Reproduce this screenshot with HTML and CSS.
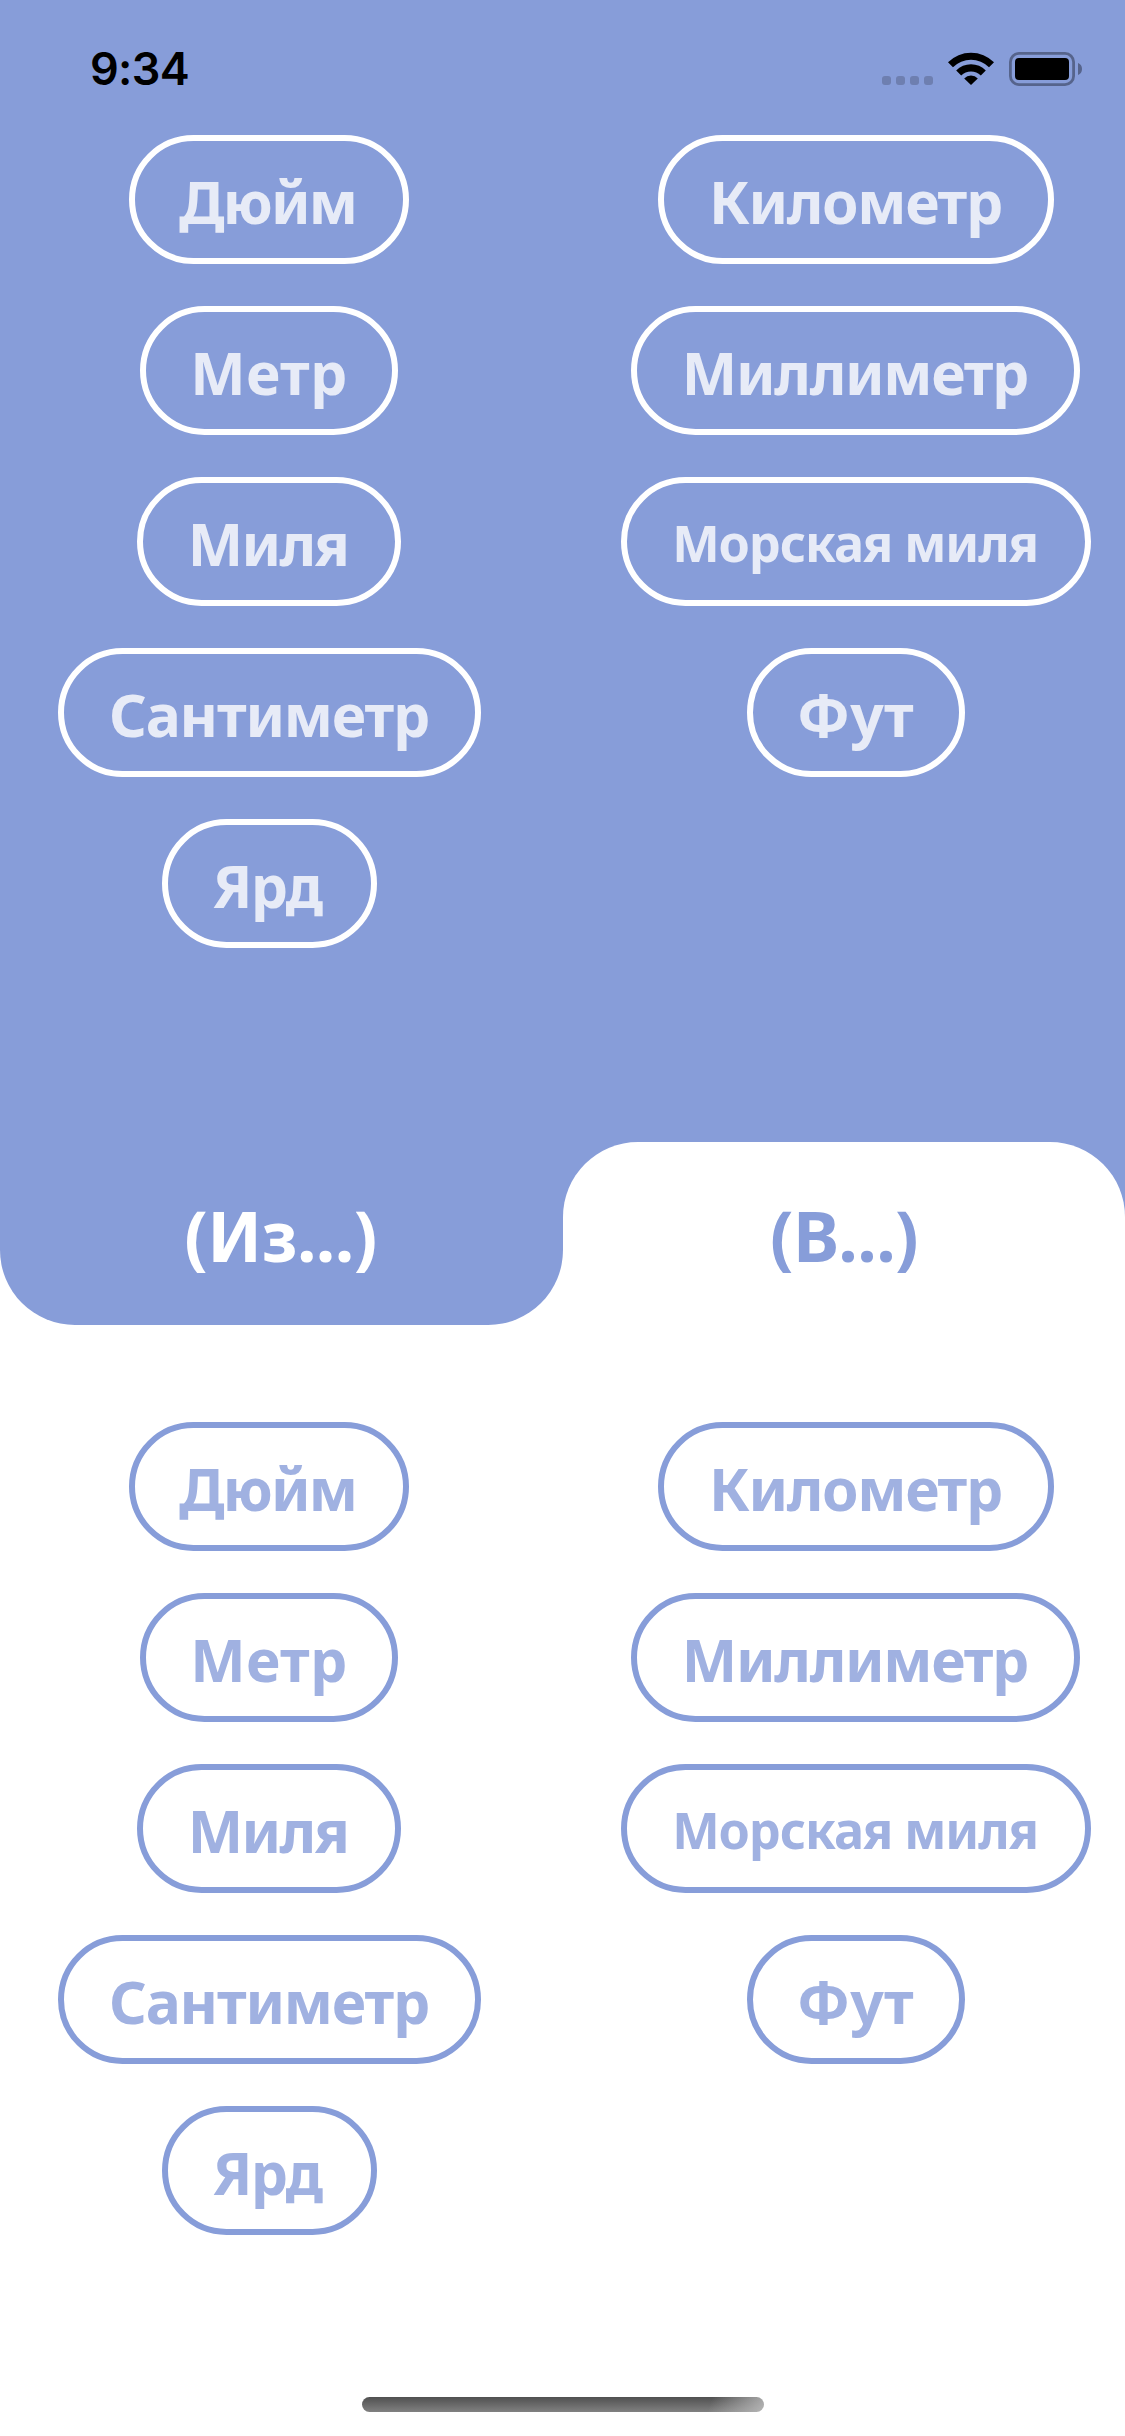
FILE: index.html
```html
<!DOCTYPE html>
<html lang="ru">
<head>
  <meta charset="utf-8">
  <title>Конвертер длины</title>
  <link rel="stylesheet" href="styles.css">
</head>
<body>
  <div class="screen">
    <section class="panel panel-from">
      <header class="status">
        <span class="time">9:34</span>
        <div class="status-icons">
          <span class="signal"><i></i><i></i><i></i><i></i></span>
          <svg class="wifi" width="46" height="33" viewBox="0 0 46 33">
            <path d="M0 10.2A32.5 32.5 0 0 1 46 10.2L41 15.2A25.6 25.6 0 0 0 5 15.2Z"/>
            <path d="M8.2 18.4A20.9 20.9 0 0 1 37.8 18.4L32.8 23.4A14 14 0 0 0 13.2 23.4Z"/>
            <path d="M16.2 26.4A9.6 9.6 0 0 1 29.8 26.4L23 33Z"/>
          </svg>
          <svg class="battery" width="74" height="34" viewBox="0 0 74 34">
            <rect class="shell" x="1.4" y="1.4" width="63.2" height="31.2" rx="8.6"/>
            <rect x="6" y="6" width="54" height="22" rx="4"/>
            <path class="nub" d="M69 11C71.6 12 73 14.300 73 17S71.600 22 69 23Z"/>
          </svg>
        </div>
      </header>
      <div class="units">
        <div class="column column-left">
          <button class="unit inch">Дюйм</button>
          <button class="unit metre">Метр</button>
          <button class="unit mile">Миля</button>
          <button class="unit centimetre">Сантиметр</button>
          <button class="unit yard">Ярд</button>
        </div>
        <div class="column column-right">
          <button class="unit kilometre">Километр</button>
          <button class="unit millimetre">Миллиметр</button>
          <button class="unit nautical">Морская миля</button>
          <button class="unit foot">Фут</button>
        </div>
      </div>
    </section>

    <div class="tabs">
      <div class="tab-slot"><div class="tab tab-from">(Из...)</div></div>
      <div class="tab-slot"><div class="tab tab-to">(В...)</div></div>
    </div>

    <section class="panel panel-to">
      <div class="units">
        <div class="column column-left">
          <button class="unit inch">Дюйм</button>
          <button class="unit metre">Метр</button>
          <button class="unit mile">Миля</button>
          <button class="unit centimetre">Сантиметр</button>
          <button class="unit yard">Ярд</button>
        </div>
        <div class="column column-right">
          <button class="unit kilometre">Километр</button>
          <button class="unit millimetre">Миллиметр</button>
          <button class="unit nautical">Морская миля</button>
          <button class="unit foot">Фут</button>
        </div>
      </div>
      <div class="home-indicator"></div>
    </section>
  </div>
</body>
</html>
```
FILE: styles.css
```css
:root {
  --blue: #879dd9;
  --paper: #fff;
}

* {
  box-sizing: border-box;
}

body {
  margin: 0;
  font-family: "Noto Sans", "Open Sans", sans-serif;
}

.screen {
  width: 1125px;
  height: 2436px;
  display: flex;
  flex-direction: column;
  overflow: hidden;
  background: var(--paper);
}

.panel {
  display: flex;
  flex-direction: column;
}

.panel-from {
  height: 1142px;
  background: var(--blue);
}

.panel-to {
  flex: 1;
  padding-top: 97px;
  background: var(--paper);
}

/* Status bar */

.status {
  height: 135px;
  padding: 52px 43px 0 90px;
  display: flex;
  justify-content: space-between;
  align-items: flex-start;
}

.time {
  font: 600 45px/34px "Inter", sans-serif;
  letter-spacing: -0.7px;
}

.status-icons {
  display: flex;
  align-items: flex-start;
}

.signal {
  display: flex;
  gap: 5px;
  padding-top: 24px;
  margin-right: 15px;
}

.signal i {
  width: 9px;
  height: 9px;
  border-radius: 3px;
  background: #6e7fb0;
}

.wifi {
  margin: 0 15px 0 0;
}

.battery {
  margin-right: -1px;
}

.shell {
  fill: none;
  stroke: #56648c;
  stroke-width: 2.8;
}

.nub {
  fill: #56648c;
}

/* Unit buttons */

.units {
  display: flex;
}

.column {
  display: flex;
  flex-direction: column;
  align-items: center;
  gap: 42px;
}

.column-left {
  width: 538px;
}

.column-right {
  width: 539px;
  margin-left: 48px;
}

.unit {
  height: 129px;
  padding: 5px 0 0;
  border: 6px solid #fff;
  border-radius: 64.5px;
  background: none;
  color: #e7ebf7;
  font: 700 58.8px/1.36 "Noto Sans", "Open Sans", sans-serif;
  white-space: nowrap;
}

.panel-to .unit {
  border-color: var(--blue);
  color: #a0b1e1;
}

.inch {
  width: 280px;
  padding-right: 3px;
  letter-spacing: -1.9px;
}

.metre {
  width: 258px;
  letter-spacing: 0.3px;
}

.mile {
  width: 264px;
  padding-right: 2px;
  letter-spacing: -1.7px;
}

.centimetre {
  width: 423px;
  letter-spacing: -1.2px;
}

.yard {
  width: 215px;
  padding-right: 4px;
  letter-spacing: -1.8px;
}

.kilometre {
  width: 396px;
  letter-spacing: -1.3px;
}

.millimetre {
  width: 449px;
  padding-right: 1px;
  letter-spacing: -1.3px;
}

.nautical {
  width: 470px;
  padding-top: 4px;
  padding-right: 1px;
  font-size: 50.4px;
  letter-spacing: -1.1px;
}

.foot {
  width: 218px;
  letter-spacing: 0.2px;
}

/* Tabs */

.tabs {
  height: 183px;
  display: flex;
}

.tab-slot {
  width: 563px;
}

.tab-slot:first-child {
  background: var(--paper);
}

.tab-slot:last-child {
  width: 562px;
  background: var(--blue);
}

.tab {
  height: 100%;
  padding-top: 2px;
  display: flex;
  align-items: center;
  justify-content: center;
  font-size: 69.5px;
  font-weight: 700;
  letter-spacing: -0.6px;
}

.tab-from {
  padding-right: 2px;
  border-radius: 0 0 75px 75px;
  background: var(--blue);
  color: #fff;
}

.tab-to {
  border-radius: 75px 75px 0 0;
  background: var(--paper);
  color: var(--blue);
}

.home-indicator {
  width: 402px;
  height: 15px;
  margin: auto auto 24px;
  border-radius: 8px;
  background:
    linear-gradient(110deg, transparent 86%, rgba(190, 190, 190, 0.85) 100%),
    linear-gradient(#505050, #818181);
}
```
